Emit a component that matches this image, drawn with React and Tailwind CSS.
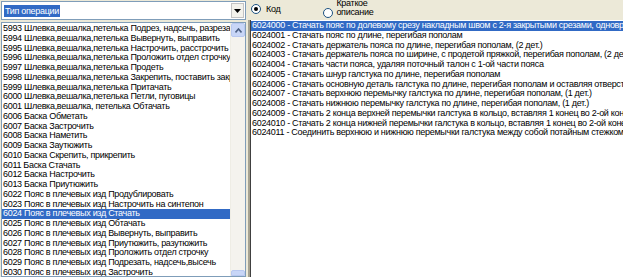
import React from "react";

const leftItems = [
  "5993 Шлевка,вешалка,петелька Подрез, надсечь, разрезать",
  "5994 Шлевка,вешалка,петелька Вывернуть, выправить",
  "5995 Шлевка,вешалка,петелька Настрочить, расстрочить",
  "5996 Шлевка,вешалка,петелька Проложить отдел строчку",
  "5997 Шлевка,вешалка,петелька Продеть",
  "5998 Шлевка,вешалка,петелька Закрепить, поставить закрепку",
  "5999 Шлевка,вешалка,петелька Притачать",
  "6000 Шлевка,вешалка,петелька Петли, пуговицы",
  "6001 Шлевка,вешалка, петелька Обтачать",
  "6006 Баска Обметать",
  "6007 Баска Застрочить",
  "6008 Баска Наметить",
  "6009 Баска Заутюжить",
  "6010 Баска Скрепить, прикрепить",
  "6011 Баска Стачать",
  "6012 Баска Настрочить",
  "6013 Баска Приутюжить",
  "6022 Пояс в плечевых изд Продублировать",
  "6023 Пояс в плечевых изд Настрочить на синтепон",
  "6024 Пояс в плечевых изд Стачать",
  "6025 Пояс в плечевых изд Обтачать",
  "6026 Пояс в плечевых изд Вывернуть, выправить",
  "6027 Пояс в плечевых изд Приутюжить, разутюжить",
  "6028 Пояс в плечевых изд Проложить отдел строчку",
  "6029 Пояс в плечевых изд Подрезать, надсечь,высечь",
  "6030 Пояс в плечевых изд Застрочить",
];

const rightItems = [
  "6024000 - Стачать пояс по долевому срезу накладным швом с 2-я закрытыми срезами, одновременно",
  "6024001 - Стачать пояс по длине, перегибая пополам",
  "6024002 - Стачать держатель пояса по длине, перегибая пополам, (2 дет.)",
  "6024003 - Стачать держатель пояса по ширине, с продетой пряжкой, перегибая пополам, (2 дет.)",
  "6024004 - Стачать части пояса, удаляя поточный талон с 1-ой части пояса",
  "6024005 - Стачать шнур галстука по длине, перегибая пополам",
  "6024006 - Стачать основную деталь галстука по длине, перегибая пополам и оставляя отверстие",
  "6024007 - Стачать верхнюю перемычку галстука по длине, перегибая пополам, (1 дет.)",
  "6024008 - Стачать нижнюю перемычку галстука по длине, перегибая пополам, (1 дет.)",
  "6024009 - Стачать 2 конца верхней перемычки галстука в кольцо, вставляя 1 конец во 2-ой конец",
  "6024010 - Стачать 2 конца нижней перемычки галстука в кольцо, вставляя 1 конец во 2-ой конец",
  "6024011 - Соединить верхнюю и нижнюю перемычки галстука между собой потайным стежком, ",
];

const font = { fontFamily: '"Liberation Sans", Arial, sans-serif' };

export default function App() {
  return (
    <div
      className="w-[623px] h-[277px] bg-[#ece9d8] flex overflow-hidden text-[9px] tracking-[-0.3px] text-black"
      style={font}
    >
      {/* Left column */}
      <div className="w-[247px] flex flex-col pl-[1px] pt-[1px]">
        {/* Combobox */}
        <div className="h-[19px] w-[245px] border border-[#7f9db9] bg-white flex items-center pl-[2px] pr-[1px]">
          <div className="flex-1 flex items-center">
            <span className="bg-[#316ac5] text-white leading-[12px] px-[1px]">Тип операции</span>
          </div>
          <div className="w-[13px] h-[15px] bg-[#f3f2ec] border border-[#c3c3c3] flex items-center justify-center">
            <svg width="7" height="4" viewBox="0 0 7 4">
              <polygon points="0,0 7,0 3.5,4" fill="#000" />
            </svg>
          </div>
        </div>
        {/* Listbox */}
        <div className="mt-[2px] flex-1 w-[245px] border border-[#7f9db9] bg-white flex overflow-hidden">
          <div className="flex-1 overflow-hidden pt-[1px]">
            {leftItems.map((t, i) => (
              <div
                key={i}
                className={
                  "h-[9.75px] leading-[9.75px] whitespace-nowrap pl-[1px] " +
                  (i === 19 ? "bg-[#316ac5] text-white" : "")
                }
              >
                {t}
              </div>
            ))}
          </div>
          {/* Scrollbar */}
          <div className="w-[15px] bg-[#f4f3ee] border-l border-[#eeede5] flex flex-col justify-between">
            <div className="h-[14px] bg-[#c8d6f7] border border-[#b8c8f0] rounded-[2px] flex items-center justify-center">
              <svg width="7" height="5" viewBox="0 0 7 5">
                <polyline points="0.5,4.5 3.5,1 6.5,4.5" fill="none" stroke="#4d6185" strokeWidth="1.6" />
              </svg>
            </div>
            <div className="h-[6px] bg-[#c8d6f7] border border-[#b8c8f0] rounded-t-[2px]" />
          </div>
        </div>
      </div>

      {/* Right column */}
      <div className="flex-1 flex flex-col pl-[2px]">
        <div className="h-[20px] flex items-start overflow-hidden">
          <div className="flex items-center mt-[4px] ml-[3px]">
            <div className="w-[10px] h-[10px] rounded-full border border-[#1c5180] bg-white flex items-center justify-center">
              <div className="w-[4px] h-[4px] rounded-full bg-black" />
            </div>
            <span className="ml-[5px] leading-[10px]">Код</span>
          </div>
          <div className="flex items-start ml-[43px]">
            <div className="mt-[8px] w-[10px] h-[10px] rounded-full border border-[#1c5180] bg-white" />
            <div className="ml-[3px] leading-[9px] mt-[-1px]">
              <div>Краткое</div>
              <div>описание</div>
            </div>
          </div>
        </div>
        <div className="flex-1 flex border-l-2 border-[#a5a292]">
          <div className="flex-1 bg-white border-l border-[#404040] overflow-hidden pt-[1px]">
            {rightItems.map((t, i) => (
              <div
                key={i}
                className={
                  "h-[9.75px] leading-[9.75px] whitespace-nowrap pl-[1px] " +
                  (i === 0 ? "bg-[#316ac5] text-white" : "")
                }
              >
                {t}
              </div>
            ))}
          </div>
          <div className="w-[4px] bg-gradient-to-r from-[#fbfaf6] to-[#efede3]" />
        </div>
      </div>
    </div>
  );
}
